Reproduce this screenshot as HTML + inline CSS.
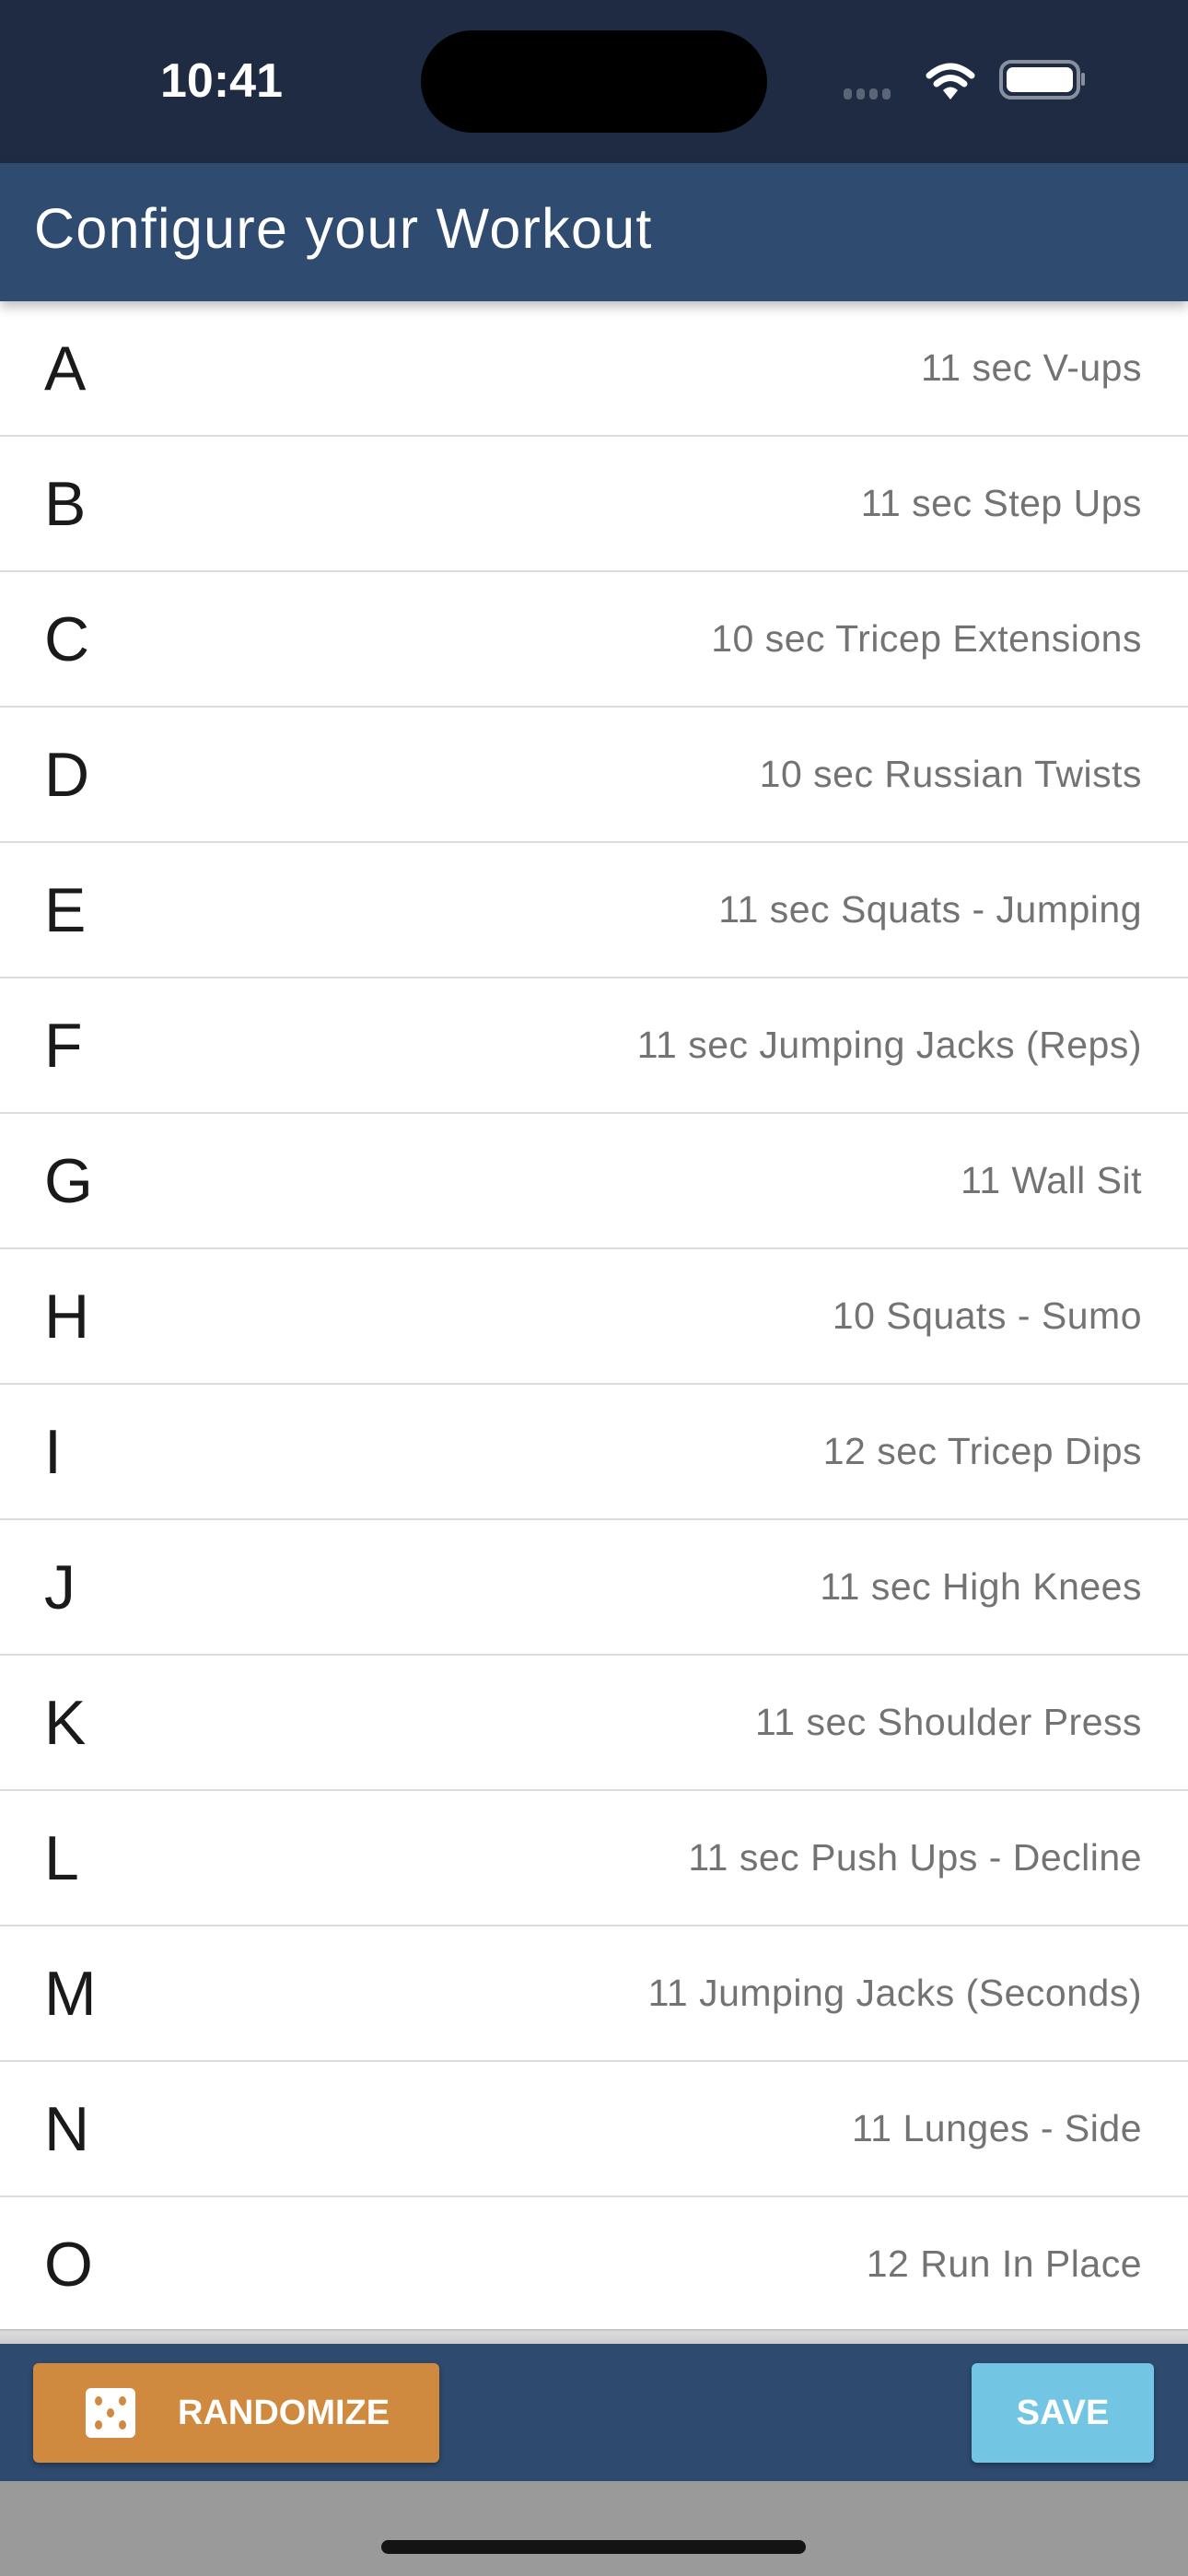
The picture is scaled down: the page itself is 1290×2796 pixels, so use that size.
<!DOCTYPE html>
<html><head><meta charset="utf-8">
<style>
*{margin:0;padding:0;box-sizing:border-box}
body{width:1290px;height:2796px;overflow:hidden;background:#fff;font-family:"Liberation Sans",sans-serif;position:relative}
.status{position:absolute;left:0;top:0;width:1290px;height:177px;background:#1e2b43}
.time{position:absolute;left:174px;top:58px;color:#fff;font-size:52px;font-weight:bold;letter-spacing:0px}
.island{position:absolute;left:457px;top:33px;width:376px;height:111px;background:#000;border-radius:56px}
.header{position:absolute;left:0;top:177px;width:1290px;height:150px;background:#2f4b70;box-shadow:0 6px 12px rgba(0,0,0,.25);z-index:2}
.header h1{position:absolute;left:37px;top:36px;color:#fff;font-weight:normal;font-size:61px;letter-spacing:1.3px}
.list{position:absolute;left:0;top:327px;width:1290px}
.row{height:147px;border-bottom:2px solid #dcdcdc;position:relative}
.row .l{position:absolute;left:48px;top:34px;font-size:68px;color:#1a1a1a}
.row .r{position:absolute;right:50px;top:49px;font-size:41px;letter-spacing:0.5px;color:#737373}
.sep{position:absolute;left:0;top:2528px;width:1290px;height:16px;background:linear-gradient(#bbb,#ddd 20%,#ccc)}
.bar{position:absolute;left:0;top:2544px;width:1290px;height:149px;background:#2e4a6f}
.btn{position:absolute;top:21px;height:108px;border-radius:6px;color:#fff;font-size:38px;font-weight:bold;box-shadow:0 3px 6px rgba(0,0,0,.3)}
.rand{left:36px;width:441px;background:#d08a3f}
.save{left:1055px;width:198px;background:#72c6e3;text-align:center;line-height:108px}
.bottom{position:absolute;left:0;top:2693px;width:1290px;height:103px;background:#9a9a9a}
.home{position:absolute;left:414px;top:64px;width:461px;height:15px;background:#141414;border-radius:8px}
</style></head><body>
<div class="status">
<div class="time">10:41</div>
<div class="island"></div>
<svg style="position:absolute;left:910px;top:60px" width="270" height="54" viewBox="0 0 270 54">
<g fill="#5b6577"><rect x="6" y="36" width="9" height="12" rx="4"/><rect x="20" y="36" width="9" height="12" rx="4"/><rect x="34" y="36" width="9" height="12" rx="4"/><rect x="48" y="36" width="9" height="12" rx="4"/></g>
<g fill="none" stroke="#fff" stroke-width="7" stroke-linecap="round"><path d="M99 22 Q122 2 145 22"/><path d="M107 31 Q122 18 137 31"/></g>
<path d="M114 38 Q122 31 130 38 L122 48 Z" fill="#fff"/>
<rect x="177" y="7" width="84" height="39" rx="11" fill="none" stroke="#8890a0" stroke-width="4"/>
<rect x="183" y="13" width="72" height="27" rx="7" fill="#fff"/>
<rect x="264" y="19" width="4" height="14" rx="2" fill="#8890a0"/>
</svg>
</div>
<div class="header"><h1>Configure your Workout</h1></div>
<div class="list">
<div class="row"><span class="l">A</span><span class="r">11 sec V-ups</span></div>
<div class="row"><span class="l">B</span><span class="r">11 sec Step Ups</span></div>
<div class="row"><span class="l">C</span><span class="r">10 sec Tricep Extensions</span></div>
<div class="row"><span class="l">D</span><span class="r">10 sec Russian Twists</span></div>
<div class="row"><span class="l">E</span><span class="r">11 sec Squats - Jumping</span></div>
<div class="row"><span class="l">F</span><span class="r">11 sec Jumping Jacks (Reps)</span></div>
<div class="row"><span class="l">G</span><span class="r">11 Wall Sit</span></div>
<div class="row"><span class="l">H</span><span class="r">10 Squats - Sumo</span></div>
<div class="row"><span class="l">I</span><span class="r">12 sec Tricep Dips</span></div>
<div class="row"><span class="l">J</span><span class="r">11 sec High Knees</span></div>
<div class="row"><span class="l">K</span><span class="r">11 sec Shoulder Press</span></div>
<div class="row"><span class="l">L</span><span class="r">11 sec Push Ups - Decline</span></div>
<div class="row"><span class="l">M</span><span class="r">11 Jumping Jacks (Seconds)</span></div>
<div class="row"><span class="l">N</span><span class="r">11 Lunges - Side</span></div>
<div class="row" style="border-bottom:none"><span class="l">O</span><span class="r">12 Run In Place</span></div>
</div>
<div class="sep"></div>
<div class="bar">
<div class="btn rand">
<svg style="position:absolute;left:57px;top:27px" width="54" height="54" viewBox="0 0 54 54"><rect width="54" height="54" rx="6" fill="#fff"/><g fill="#d08a3f"><ellipse cx="14" cy="14" rx="4" ry="5"/><ellipse cx="40" cy="14" rx="4" ry="5"/><ellipse cx="27" cy="27" rx="4" ry="5"/><ellipse cx="14" cy="40" rx="4" ry="5"/><ellipse cx="40" cy="40" rx="4" ry="5"/></g></svg>
<span style="position:absolute;left:157px;top:33px">RANDOMIZE</span>
</div>
<div class="btn save">SAVE</div>
</div>
<div class="bottom"><div class="home"></div></div>
</body></html>
